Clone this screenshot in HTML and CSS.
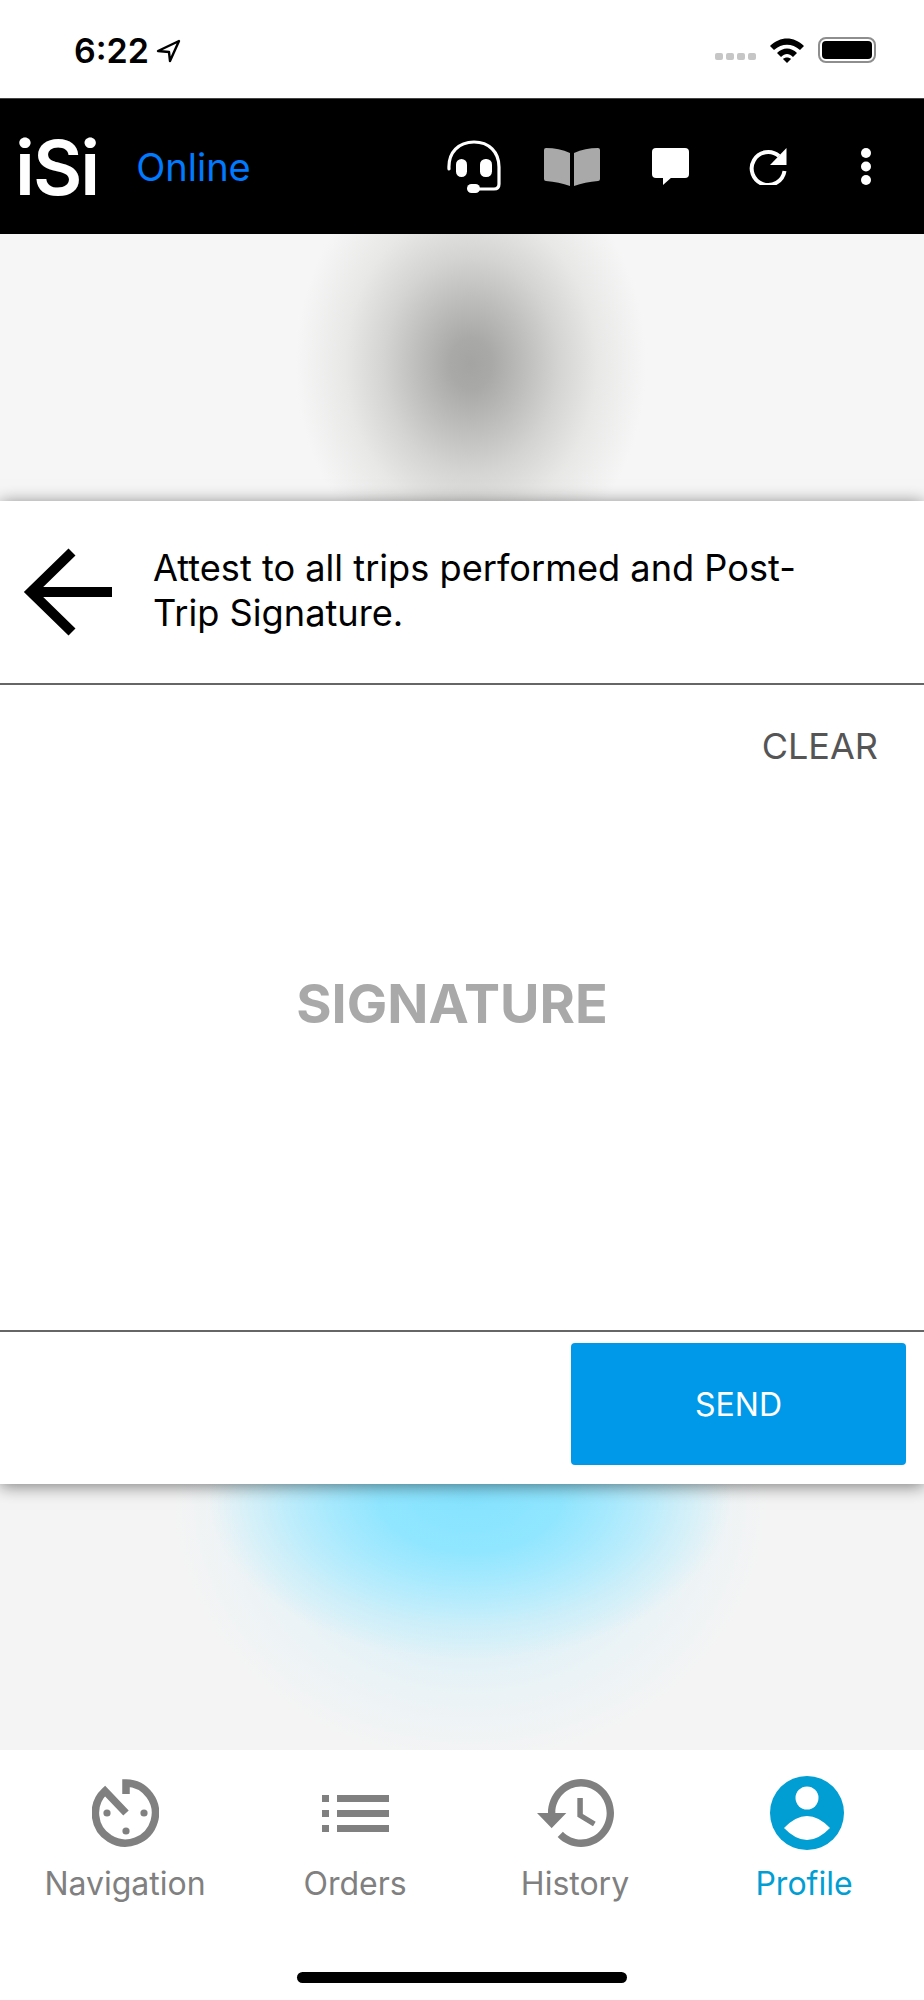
FILE: index.html
```html
<!DOCTYPE html>
<html lang="en">
  <head>
    <meta charset="UTF-8" />
    <meta name="viewport" content="width=device-width, initial-scale=1.0" />
    <link rel="stylesheet" href="styles.css">
    <title>Post-Trip Signature</title>
  </head>
  <body>

    <!-- phone status bar -->
    <section class="status-bar">
      <div class="status-left">
        <span class="clock">6:22</span>
        <svg width="25" height="24" viewBox="0 0 25 24"><path d="M23 2 L2 12 L13 13 L14 22 Z" fill="none" stroke="#000" stroke-width="2.4" stroke-linejoin="round"/></svg>
      </div>
      <div class="status-right">
        <div class="signal"><i></i><i></i><i></i><i></i></div>
        <svg width="36" height="26" viewBox="0 0 36 26">
          <path d="M1 9 C11 -1 25 -1 35 9 L31 13 C23 6 13 6 5 13 Z" fill="#000"/>
          <path d="M8 16 C14 10 22 10 28 16 L24 20 C20 16 16 16 12 20 Z" fill="#000"/>
          <path d="M14 22 C16 20 20 20 22 22 L18 26 Z" fill="#000"/>
        </svg>
        <div class="battery"><div class="battery-fill"></div></div>
      </div>
    </section>

    <header class="top-bar">
      <span class="logo">iSi</span>
      <span class="online">Online</span>
      <div class="top-icons">
        <div class="top-icon">
          <svg width="54" height="53" viewBox="0 0 54 53">
            <path d="M2 29 C1 12 12 2 27 2 C42 2 52 12 52 27 V44 Q52 49 47 49 H26" fill="none" stroke="#fff" stroke-width="3.2" stroke-linecap="round"/>
            <rect x="20" y="44" width="13" height="9" rx="4.5" fill="#fff"/>
            <rect x="9" y="19" width="11" height="18" rx="5.5" fill="#fff"/>
            <rect x="33" y="19" width="12" height="18" rx="5.5" fill="#fff"/>
          </svg>
        </div>
        <div class="top-icon">
          <svg width="56" height="38" viewBox="0 0 56 38">
            <path d="M2 0 Q15 0 26 5 V38 Q15 34 2 33 Q0 33 0 31 V2 Q0 0 2 0 Z" fill="#a9a9a9"/>
            <path d="M54 0 Q41 0 30 5 V38 Q41 34 54 33 Q56 33 56 31 V2 Q56 0 54 0 Z" fill="#a9a9a9"/>
          </svg>
        </div>
        <div class="top-icon">
          <svg width="37" height="37" viewBox="0 0 37 37">
            <rect width="37" height="30" rx="4" fill="#fff"/>
            <path d="M11 29 V37 L20 29 Z" fill="#fff"/>
          </svg>
        </div>
        <div class="top-icon">
          <svg width="38" height="37" viewBox="0 0 38 37">
            <path d="M30 8 A16.5 16.5 0 1 0 35.5 23" fill="none" stroke="#fff" stroke-width="4"/>
            <path d="M37.5 0 V17 H21 Z" fill="#fff"/>
          </svg>
        </div>
        <div class="top-icon">
          <svg width="10" height="37" viewBox="0 0 10 37">
            <circle cx="5" cy="5" r="5" fill="#fff"/>
            <circle cx="5" cy="18.5" r="5" fill="#fff"/>
            <circle cx="5" cy="32" r="5" fill="#fff"/>
          </svg>
        </div>
      </div>
    </header>

    <div class="blur-top"></div>

    <section class="sign-panel">
      <div class="sign-title">
        <svg class="back-arrow" width="89" height="88" viewBox="0 0 89 88">
          <path d="M49 4 L8 44 L49 84 M14 44 H89" fill="none" stroke="#000" stroke-width="10"/>
        </svg>
        <p class="title-text">Attest to all trips performed and Post-Trip Signature.</p>
      </div>
      <div class="sign-pad">
        <span class="clear-link">CLEAR</span>
        <span class="sign-label">SIGNATURE</span>
      </div>
      <div class="sign-footer">
        <button class="send-button">SEND</button>
      </div>
    </section>

    <div class="blur-bottom"></div>

    <nav class="tabs">
      <div class="tab">
        <div class="tab-icon">
          <svg width="67" height="68" viewBox="0 0 67 68">
            <path d="M34 15 V4 A30 30 0 1 1 13 12 L34 34" fill="none" stroke="#808080" stroke-width="7.5"/>
            <circle cx="15" cy="34" r="3.6" fill="#808080"/>
            <circle cx="52" cy="34" r="3.6" fill="#808080"/>
            <circle cx="34" cy="52" r="3.6" fill="#808080"/>
          </svg>
        </div>
        <span>Navigation</span>
      </div>
      <div class="tab">
        <div class="tab-icon">
          <svg width="67" height="37" viewBox="0 0 67 37" fill="#808080">
            <rect width="7" height="7"/><rect x="15" width="52" height="7"/>
            <rect y="15" width="7" height="7"/><rect x="15" y="15" width="52" height="7"/>
            <rect y="30" width="7" height="7"/><rect x="15" y="30" width="52" height="7"/>
          </svg>
        </div>
        <span>Orders</span>
      </div>
      <div class="tab">
        <div class="tab-icon">
          <svg width="77" height="68" viewBox="1 3 21 18" preserveAspectRatio="none">
            <path d="M13 3c-4.97 0-9 4.03-9 9H1l3.89 3.89.07.14L9 12H6c0-3.87 3.13-7 7-7s7 3.13 7 7-3.13 7-7 7c-1.93 0-3.68-.79-4.94-2.06l-1.42 1.42C8.27 19.99 10.51 21 13 21c4.97 0 9-4.03 9-9s-4.03-9-9-9zm-1 5v5l4.28 2.54.72-1.21-3.5-2.08V8H12z" fill="#808080"/>
          </svg>
        </div>
        <span>History</span>
      </div>
      <div class="tab tab-active">
        <div class="tab-icon">
          <svg width="74" height="74" viewBox="0 0 74 74">
            <circle cx="37" cy="37" r="37" fill="#009ed3"/>
            <circle cx="37" cy="22" r="11.5" fill="#fff"/>
            <path d="M14 52 Q37 28 60 52 Q37 76 14 52 Z" fill="#fff"/>
          </svg>
        </div>
        <span>Profile</span>
      </div>
    </nav>

    <div class="home-bar"></div>

  </body>
</html>
```

FILE: styles.css
```css
body {
  margin: 0;
  width: 924px;
  height: 2000px;
  position: relative;
  background-color: #fff;
  font-family: Inter, "Noto Sans", sans-serif;
  overflow: hidden;
}

/* status bar */

.status-bar {
  height: 98px;
  box-sizing: border-box;
  padding: 37px 48px 0 74px;
  display: flex;
  justify-content: space-between;
  align-items: flex-start;
}

.status-left {
  display: flex;
  align-items: center;
  gap: 7px;
  height: 28px;
}

.clock {
  font-size: 34px;
  font-weight: 600;
  line-height: 28px;
  color: #000;
}

.status-right {
  display: flex;
  align-items: center;
  gap: 13px;
  height: 26px;
}

.signal {
  display: flex;
  gap: 3px;
  margin-top: 13px;
}

.signal i {
  display: block;
  width: 8px;
  height: 7px;
  border-radius: 2px;
  background-color: #c6c6c6;
}

.battery {
  width: 58px;
  height: 26px;
  box-sizing: border-box;
  border: 2px solid #8e8e8e;
  border-radius: 8px;
  padding: 2px;
}

.battery-fill {
  height: 100%;
  background-color: #000;
  border-radius: 4px;
}

/* black header */

.top-bar {
  height: 136px;
  box-sizing: border-box;
  border-top: 1px solid #444;
  background-color: #000;
  display: flex;
  align-items: center;
  padding: 0 9px 0 15px;
}

.logo {
  font-size: 76px;
  font-weight: 600;
  line-height: 90px;
  color: #fff;
  letter-spacing: -2px;
}

.online {
  margin-left: 38px;
  font-size: 38px;
  color: #007aff;
}

.top-icons {
  margin-left: auto;
  display: flex;
}

.top-icon {
  width: 98px;
  display: flex;
  justify-content: center;
  align-items: center;
}

/* blurred map behind the panel */

.blur-top {
  height: 267px;
  background-color: #f6f6f6;
  background-image: radial-gradient(ellipse 175px 215px at 471px 130px, #a4a4a2 0%, #a9a9a7 12%, #bdbdbb 30%, #d4d4d2 50%, #e8e8e7 72%, #f6f6f6 100%);
}

.blur-bottom {
  height: 266px;
  background-color: #f4f4f4;
  background-image:
    radial-gradient(ellipse 262px 165px at 470px 10px, #85e3ff 0%, #90e6ff 35%, #a5e9fe 52%, #b8ecfc 66%, rgba(200, 238, 250, 0.8) 80%, rgba(220, 240, 248, 0) 100%),
    radial-gradient(ellipse 300px 270px at 470px 10px, #d8f0f8 0%, #d8f0f8 45%, #ebf3f6 75%, #f4f4f4 100%);
}

/* signature panel */

.sign-panel {
  height: 983px;
  position: relative;
  z-index: 1;
  background-color: #fff;
  box-shadow: 0 2px 16px rgba(0, 0, 0, 0.5);
  display: flex;
  flex-direction: column;
}

.sign-title {
  height: 184px;
  box-sizing: border-box;
  border-bottom: 2px solid #666;
  display: flex;
  align-items: center;
  padding-left: 23px;
  gap: 41px;
}

.back-arrow {
  flex-shrink: 0;
}

.title-text {
  margin: 0 0 3px;
  width: 680px;
  font-size: 36.2px;
  line-height: 45px;
  color: #000;
}

.sign-pad {
  height: 647px;
  box-sizing: border-box;
  border-bottom: 2px solid #666;
  padding: 40px 46px 0 0;
  display: flex;
  flex-direction: column;
}

.clear-link {
  align-self: flex-end;
  font-size: 36px;
  line-height: 42px;
  color: #555;
}

.sign-label {
  align-self: center;
  margin: 207px 0 0 26px;
  font-size: 54px;
  font-weight: 700;
  line-height: 60px;
  color: #a9a9a9;
}

.sign-footer {
  flex: 1;
  display: flex;
  justify-content: flex-end;
  padding: 11px 18px 0 0;
}

.send-button {
  width: 335px;
  height: 122px;
  border: none;
  border-radius: 4px;
  background-color: #0099e9;
  color: #fff;
  font-family: Inter, "Noto Sans", sans-serif;
  font-size: 32px;
}

/* bottom tabs */

.tabs {
  height: 250px;
  display: grid;
  grid-template-columns: 250px 210px 230px 234px;
  background-color: #fff;
}

.tab {
  display: flex;
  flex-direction: column;
  align-items: center;
  font-size: 32px;
  color: #808080;
}

.tab-icon {
  height: 100px;
  margin: 13px 0 1px;
  display: flex;
  align-items: center;
  justify-content: center;
}

.tab-active {
  color: #009ed3;
}

.tab-active span {
  margin-right: 6px;
}

.home-bar {
  position: absolute;
  left: 297px;
  top: 1972px;
  width: 330px;
  height: 11px;
  border-radius: 6px;
  background-color: #000;
}
```
